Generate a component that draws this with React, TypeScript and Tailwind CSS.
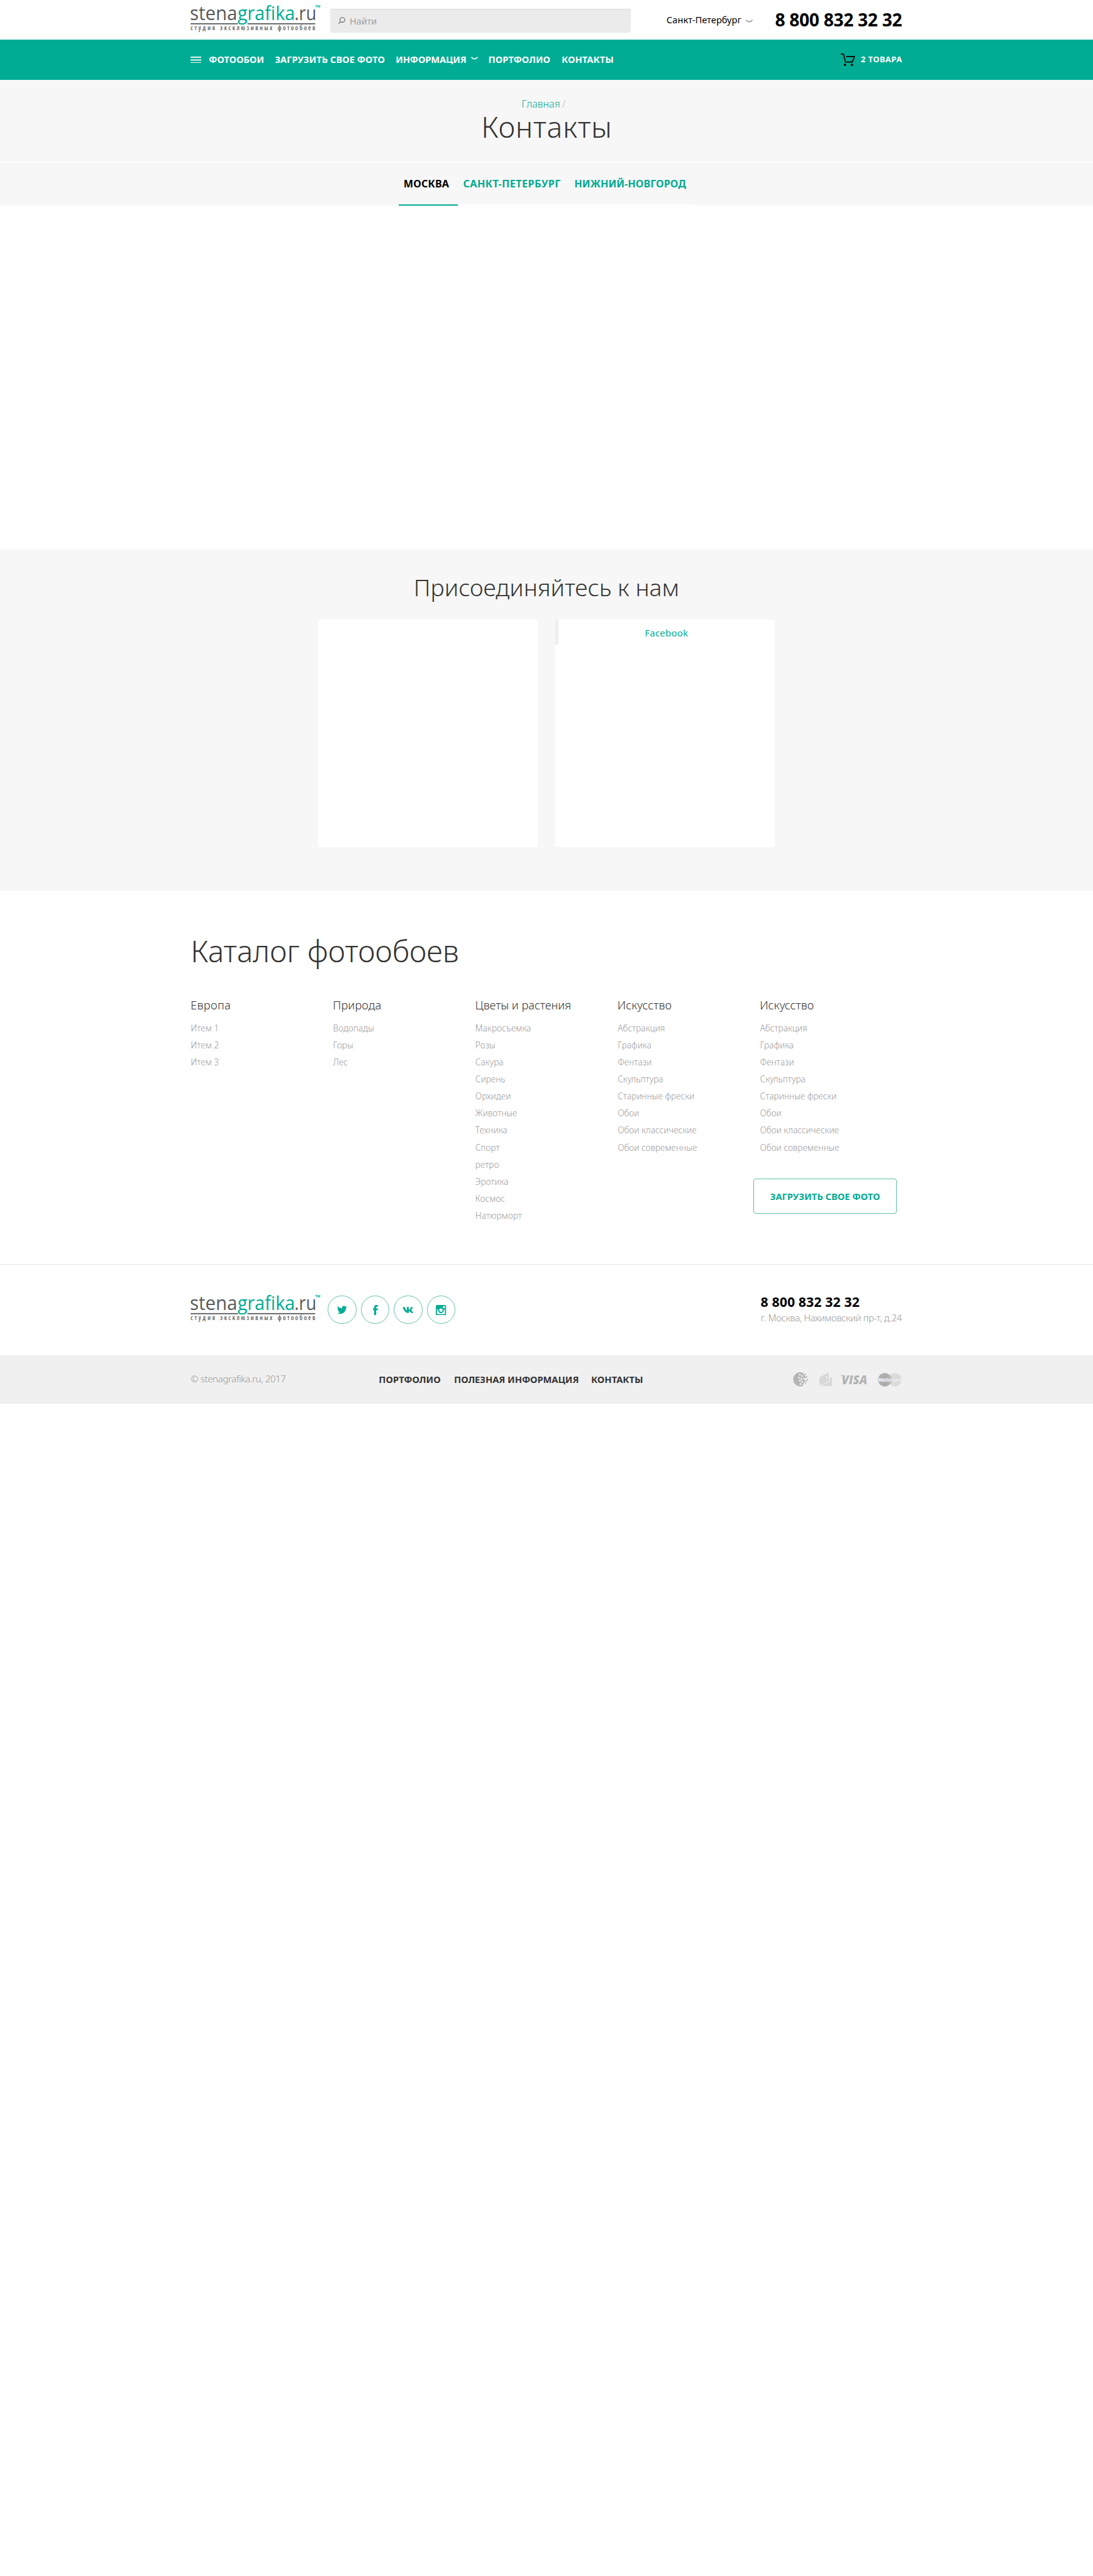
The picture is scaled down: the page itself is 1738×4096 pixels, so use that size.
import React from "react";
import { FaTwitter, FaVk } from "react-icons/fa";

function Logo() {
  return (
    <svg viewBox="0 8 228 50" className="block h-[45.3px] w-[206.4px] shrink-0 overflow-visible">
      <g className="font-['Open_Sans'] text-[34px] font-normal">
        <text x="-1" y="35.3" textLength="83" lengthAdjust="spacingAndGlyphs" fill="#58595b">stena</text>
        <rect x="0" y="41" width="219" height="2" fill="#58595b" />
        <rect x="83" y="39" width="17" height="6" fill="#fff" />
        <text x="82.5" y="35.3" textLength="101" lengthAdjust="spacingAndGlyphs" fill="#00ac93">grafika</text>
        <text x="182.5" y="35.3" textLength="38.5" lengthAdjust="spacingAndGlyphs" fill="#58595b">.ru</text>
      </g>
      <text x="219" y="14" textLength="9" lengthAdjust="spacingAndGlyphs" fill="#00ac93" className="font-['Open_Sans'] text-[6px] font-bold">TM</text>
      <g fill="#58595b" className="font-['Open_Sans'] text-[11px] font-semibold [font-stretch:75%]">
        <text x="0" y="53.3" textLength="43" lengthAdjust="spacing">студия</text>
        <text x="52" y="53.3" textLength="91.5" lengthAdjust="spacing">эксклюзивных</text>
        <text x="153" y="53.3" textLength="66" lengthAdjust="spacing">фотообоев</text>
      </g>
    </svg>
  );
}

function Chevron({ className }: { className: string }) {
  return (
    <svg viewBox="0 0 11 5" className={className} fill="none" stroke="currentColor" strokeWidth="1.7">
      <path d="M.5 .9 Q5.5 6.6 10.5 .9" />
    </svg>
  );
}

function Header() {
  return (
    <header className="h-[63.4px] bg-white">
      <div className="mx-auto flex h-full w-[1131.5px]">
        <a href="#" className="mt-[7.2px] w-[221.8px] shrink-0"><Logo /></a>
        <div className="mt-[13.6px] flex h-[38px] w-[478px] shrink-0 rounded-[4px] bg-[#ebebeb] pl-[13.3px] shadow-[inset_0_1px_1px_rgba(0,0,0,0.08)]">
          <svg viewBox="0 0 12 12" className="mt-[13.5px] h-[11px] w-[11px]" fill="none" stroke="#666" strokeWidth="1.3">
            <circle cx="7" cy="5" r="4.2" />
            <path d="M4 8 L.5 11.5" />
          </svg>
          <span className="ml-[6.6px] pt-[1px] text-[14.4px] leading-[38px] text-[#9f9f9f]">Найти</span>
        </div>
        <div className="ml-[56.8px] flex w-[172.6px] shrink-0 items-center pt-[1px] text-[14.6px] tracking-[0.04px] text-black">
          <span className="w-[126.4px]">Санкт-Петербург</span>
          <Chevron className="mt-[3px] h-[5px] w-[11px] text-[#999]" />
        </div>
        <div className="whitespace-nowrap text-[28.1px] font-bold leading-[63px] tracking-[-0.28px] text-black">8 800 832 32 32</div>
      </div>
    </header>
  );
}

function MainNav() {
  return (
    <nav className="h-[63.3px] bg-[#00ac93] text-[14.7px] font-bold text-white">
      <div className="mx-auto flex h-full w-[1131.5px] items-center whitespace-nowrap pb-[1.6px]">
        <span className="w-[28.7px] pt-[1.6px]">
          <svg viewBox="0 0 19 12" className="h-[10.9px] w-[17.2px]" fill="#fff">
            <rect width="19" height="2" />
            <rect y="5" width="19" height="2" />
            <rect y="10" width="19" height="2" />
          </svg>
        </span>
        <a href="#" className="w-[105.2px]">ФОТООБОИ</a>
        <a href="#" className="w-[192.1px] tracking-[0.03px]">ЗАГРУЗИТЬ СВОЕ ФОТО</a>
        <a href="#" className="w-[119.4px] tracking-[-0.14px]">ИНФОРМАЦИЯ</a>
        <span className="w-[28px]"><Chevron className="-mt-[3px] h-[5px] w-[11px] text-white" /></span>
        <a href="#" className="w-[116.5px] tracking-[0.05px]">ПОРТФОЛИО</a>
        <a href="#" className="tracking-[0.04px]">КОНТАКТЫ</a>
        <a href="#" className="ml-auto flex w-[97.3px] items-center pt-[1.6px]">
          <svg viewBox="0 0 25 22" className="h-[20px] w-[22.6px] shrink-0" fill="none" stroke="#000" strokeWidth="2">
            <path d="M0 1 H4.6 L8.4 15 H20 L24 5.4 H9.5" strokeLinejoin="round" />
            <circle cx="7.3" cy="20" r="2" fill="#000" stroke="none" />
            <circle cx="19.7" cy="20" r="2" fill="#000" stroke="none" />
          </svg>
          <span className="ml-[8.7px] text-[13px] tracking-[0.46px]">2 ТОВАРА</span>
        </a>
      </div>
    </nav>
  );
}

function PageTitle() {
  return (
    <section className="h-[130.4px] bg-[#f7f7f7] pt-[26.5px]">
      <div className="mx-auto flex w-[78.8px] text-[16px] font-light leading-[24px]">
        <a href="#" className="w-[64.3px] text-[#00ac93]">Главная</a>
        <span className="text-[#bbb]">/</span>
      </div>
      <h1 className="pl-px text-center text-[46.4px] font-light leading-[48px] tracking-[0.7px] text-[#333]">Контакты</h1>
    </section>
  );
}

function CityTabs() {
  return (
    <section className="mt-[1.8px] h-[67.9px] bg-[#f7f7f7]">
      <div className="mx-auto flex h-full w-[470.7px] whitespace-nowrap text-[16.2px] font-bold leading-[67px] text-[#00ac93]">
        <a href="#" className="w-[94.1px] border-b-2 border-[#00ac93] pl-[8.2px] tracking-[0.14px] text-black">МОСКВА</a>
        <a href="#" className="w-[176.9px] border-b-2 border-white pl-[8.7px] tracking-[0.41px]">САНКТ-ПЕТЕРБУРГ</a>
        <a href="#" className="w-[199.7px] border-b-2 border-white pl-[8.7px] tracking-[0.05px]">НИЖНИЙ-НОВГОРОД</a>
      </div>
    </section>
  );
}

function Social() {
  return (
    <section className="mt-[545.8px] h-[544.9px] bg-[#f7f7f7] pt-[39.4px]">
      <h2 className="text-center text-[37.4px] font-light leading-[44px] text-[#333]">Присоединяйтесь к нам</h2>
      <div className="mt-[28.8px] flex justify-center gap-[27.2px]">
        <div className="h-[362.1px] w-[349.4px] bg-white" />
        <div className="h-[362.1px] w-[349.4px] bg-white">
          <div className="h-[40.7px] border-l-[5px] border-[#eee] pt-px text-center text-[15px] leading-[41px] tracking-[0.2px] text-[#00ac93]">Facebook</div>
        </div>
      </div>
    </section>
  );
}

const art = ["Абстракция", "Графика", "Фентази", "Скульптура", "Старинные фрески", "Обои", "Обои классические", "Обои современные"];
const columns = [
  { title: "Европа", items: ["Итем 1", "Итем 2", "Итем 3"], spacing: "tracking-[0.46px]" },
  { title: "Природа", items: ["Водопады", "Горы", "Лес"], spacing: "tracking-[0.15px]" },
  { title: "Цветы и растения", items: ["Макросъемка", "Розы", "Сакура", "Сирень", "Орхидеи", "Животные", "Техника", "Спорт", "ретро", "Эротика", "Космос", "Натюрморт"], spacing: "tracking-[-0.02px]" },
  { title: "Искусство", items: art, spacing: "tracking-[0.07px]" },
  { title: "Искусство", items: art, spacing: "tracking-[0.07px]", upload: true },
];

function Catalog() {
  return (
    <section className="h-[592.9px] bg-white pt-[66.8px]">
      <div className="mx-auto w-[1131.5px]">
        <h2 className="text-[47.4px] font-light leading-[56px] text-[#333]">Каталог фотообоев</h2>
        <div className="mt-[45.7px] grid grid-cols-5">
          {columns.map((c, i) => (
            <div key={i}>
              <h3 className={`-ml-[0.3px] whitespace-nowrap text-[18.2px] font-light leading-[24px] text-[#333] ${c.spacing}`}>{c.title}</h3>
              <ul className="mt-[10.6px] text-[13.6px] font-light leading-[27.16px] tracking-[0.06px] text-[#999]">
                {c.items.map((t) => <li key={t}>{t}</li>)}
              </ul>
              {c.upload && (
                <button className="-ml-[10px] mt-[35.8px] h-[56.1px] w-[227.2px] whitespace-nowrap rounded-[4px] border border-[#5fbfae] text-[14.7px] font-bold tracking-[0.03px] text-[#00ac93]">
                  ЗАГРУЗИТЬ СВОЕ ФОТО
                </button>
              )}
            </div>
          ))}
        </div>
      </div>
    </section>
  );
}

function Circle({ children }: { children: React.ReactNode }) {
  return <a href="#" className="flex h-[45.3px] w-[45.3px] items-center justify-center rounded-full border border-[#63beae] text-[#00ac93]">{children}</a>;
}

function Contacts() {
  return (
    <section className="h-[144.8px] border-t border-[#e5e5e5] bg-white">
      <div className="mx-auto flex w-[1131.5px]">
        <a href="#" className="mt-[47px] w-[218.2px]"><Logo /></a>
        <div className="mt-[48.8px] flex gap-[7.2px]">
          <Circle><FaTwitter className="h-[15.7px] w-[15.7px]" /></Circle>
          <Circle>
            <svg viewBox="0 0 9 18" className="h-[16.3px] w-[8.1px]" fill="currentColor">
              <path d="M2.2 18 V9.2 H0 V6.1 H2.2 V4.2 C2.2 1.4 3.4 0 6.2 0 H8.7 V3.1 H7 C6 3.1 5.8 3.5 5.8 4.4 V6.1 H8.7 L8.4 9.2 H5.8 V18 Z" />
            </svg>
          </Circle>
          <Circle><FaVk className="h-[18px] w-[17.5px]" /></Circle>
          <Circle>
            <svg viewBox="0 0 18 18" className="h-[16.3px] w-[16.3px]" fill="none" stroke="currentColor">
              <path fill="currentColor" stroke="none" fillRule="evenodd" d="M2 0 H16 Q18 0 18 2 V16 Q18 18 16 18 H2 Q0 18 0 16 V2 Q0 0 2 0 Z M2 7.6 V15 Q2 16 3 16 H15 Q16 16 16 15 V7.6 H14 A5.2 5.2 0 1 1 4 7.6 Z M12.6 2 V5.4 H16 V2 Z" />
              <circle cx="9" cy="9" r="4.2" fill="#fff" stroke="none" />
              <circle cx="9" cy="9" r="3.9" strokeWidth="2" />
            </svg>
          </Circle>
        </div>
        <div className="ml-auto mt-[44.4px] w-[225.2px] whitespace-nowrap">
          <div className="text-[21.1px] font-bold leading-[28px] tracking-[0.18px] text-black">8 800 832 32 32</div>
          <div className="-ml-[0.2px] mt-[1.3px] text-[14.9px] font-light leading-[20px] tracking-[-0.36px] text-[#999]">г. Москва, Нахимовский пр-т, д.24</div>
        </div>
      </div>
    </section>
  );
}

function Payments() {
  return (
    <div className="ml-auto flex w-[173.4px] items-center">
      <svg viewBox="0 0 27 25" className="h-[22.6px] w-[24.4px] shrink-0">
        <path d="M17.5 1 A12.4 12.4 0 1 0 18.5 23.4 L20 18 L22 8 Z" fill="#b5b5b5" />
        <g fill="#f0f0f0">
          <rect x="10.5" y="2.6" width="3" height="3" rx=".8" transform="rotate(20 12 4)" />
          <rect x="14.6" y="5" width="3" height="3" rx=".8" transform="rotate(20 16 6)" />
          <rect x="9" y="8" width="3" height="3" rx=".8" transform="rotate(20 10 9)" />
          <rect x="13.4" y="10" width="3" height="3" rx=".8" transform="rotate(20 15 11)" />
          <rect x="18" y="9.6" width="3" height="3" rx=".8" transform="rotate(20 19 11)" />
          <rect x="10.6" y="13.4" width="3" height="3" rx=".8" transform="rotate(20 12 15)" />
          <rect x="15" y="15" width="3" height="3" rx=".8" transform="rotate(20 16 16)" />
          <rect x="12" y="19" width="3" height="3" rx=".8" transform="rotate(20 13 20)" />
          <rect x="17" y="19.6" width="3" height="3" rx=".8" transform="rotate(20 18 21)" />
        </g>
        <g fill="#b5b5b5">
          <rect x="20.4" y="2.6" width="2.6" height="2.6" rx=".8" />
          <rect x="22" y="7" width="2.8" height="2.8" rx=".8" />
          <rect x="24" y="12" width="2.6" height="2.6" rx=".8" />
          <rect x="21" y="14.6" width="2.8" height="2.8" rx=".8" />
          <rect x="21" y="19" width="2.4" height="2.4" rx=".8" />
        </g>
      </svg>
      <svg viewBox="0 0 22 24" className="ml-[17.7px] h-[21.7px] w-[20px] shrink-0" fill="#d8d8d8">
        <path d="M0 8.5 Q0 7.5 1 7 L14.5 .3 Q16.5 -.4 16.5 1.6 V14 L4 21 Q1 22.6 0 20 Z M12.4 6 A1.8 1.8 0 1 0 12.4 9.6 A1.8 1.8 0 1 0 12.4 6 Z" fillRule="evenodd" />
        <path d="M18.2 7.5 H20 Q22 7.5 22 9.5 V22 Q22 24 20 24 H2.2 Q.8 24 .4 22.8 Q2 23.6 4.5 22.2 L18.2 15 Z" />
      </svg>
      <svg viewBox="0 0 48 17" className="ml-[12.6px] h-[15.4px] w-[43.5px] shrink-0 overflow-visible" fill="#b3b3b3">
        <path d="M0 .8 H5.5 Q7.6 1 8.4 5 Q5 1.8 0 .8 Z" />
        <text x="2.5" y="16.2" textLength="45" lengthAdjust="spacingAndGlyphs" className="font-['Open_Sans'] text-[21.5px] font-extrabold italic">VISA</text>
      </svg>
      <svg viewBox="0 0 42 24" className="ml-[16px] h-[21.7px] w-[38px] shrink-0 overflow-visible">
        <circle cx="30" cy="12" r="11.8" fill="#dcdcdc" />
        <circle cx="12" cy="12" r="11.8" fill="#adadad" />
        <path d="M19 6.5 H25 M18.5 8.3 H25 M18 16 H25 M19 17.8 H24" stroke="#c6c6c6" strokeWidth="1" />
        <text x="0.5" y="15" textLength="41" lengthAdjust="spacingAndGlyphs" fill="#fff" stroke="#a0a0a0" strokeWidth="0.5" paintOrder="stroke" className="font-['Open_Sans'] text-[9px] font-bold italic">MasterCard</text>
      </svg>
    </div>
  );
}

function Footer() {
  return (
    <footer className="h-[76.9px] bg-[#f0f0f0]">
      <div className="mx-auto flex h-full w-[1131.5px] items-center whitespace-nowrap">
        <span className="w-[299px] pb-[3px] text-[14.9px] font-light tracking-[-0.34px] text-[#999]">© stenagrafika.ru, 2017</span>
        <div className="flex pb-[1.6px] text-[14.7px] font-bold text-[#333]">
          <a href="#" className="w-[119.8px] tracking-[0.05px]">ПОРТФОЛИО</a>
          <a href="#" className="w-[217.9px] tracking-[-0.05px]">ПОЛЕЗНАЯ ИНФОРМАЦИЯ</a>
          <a href="#" className="tracking-[0.04px]">КОНТАКТЫ</a>
        </div>
        <Payments />
      </div>
    </footer>
  );
}

export default function App() {
  return (
    <div className="min-h-[4096px] w-full bg-white font-['Noto_Sans',sans-serif]">
      <Header />
      <MainNav />
      <PageTitle />
      <CityTabs />
      <Social />
      <Catalog />
      <Contacts />
      <Footer />
    </div>
  );
}
